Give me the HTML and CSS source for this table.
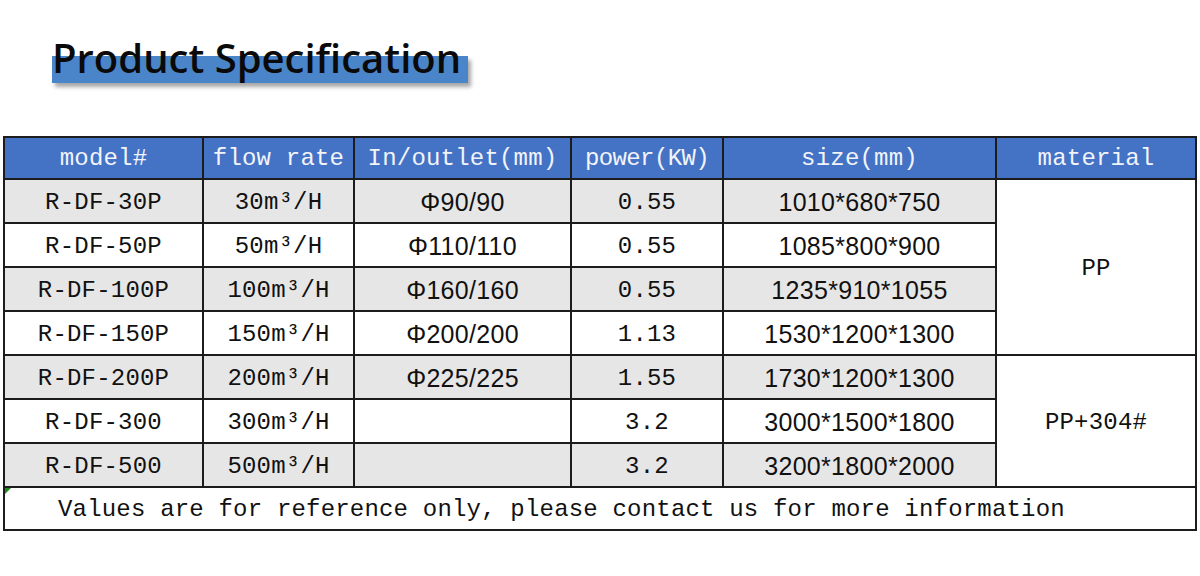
FILE: index.html
```html
<!DOCTYPE html>
<html>
<head>
<meta charset="utf-8">
<link rel="stylesheet" href="styles.css">
</head>
<body>
<div class="page">
  <div class="title-wrap">
    <h1 class="title"><span class="title-text">Product Specification</span></h1>
  </div>
  <table class="spec">
    <colgroup>
      <col class="c1"><col class="c2"><col class="c3"><col class="c4"><col class="c5"><col class="c6">
    </colgroup>
    <thead>
      <tr>
        <th>model#</th><th>flow rate</th><th>In/outlet(mm)</th><th class="tight">power(KW)</th><th>size(mm)</th><th>material</th>
      </tr>
    </thead>
    <tbody>
      <tr class="odd">
        <td>R-DF-30P</td><td>30m³/H</td><td class="sans">Φ90/90</td><td>0.55</td><td class="sans">1010*680*750</td>
        <td class="mat" rowspan="4">PP</td>
      </tr>
      <tr>
        <td>R-DF-50P</td><td>50m³/H</td><td class="sans">Φ110/110</td><td>0.55</td><td class="sans">1085*800*900</td>
      </tr>
      <tr class="odd">
        <td>R-DF-100P</td><td>100m³/H</td><td class="sans">Φ160/160</td><td>0.55</td><td class="sans">1235*910*1055</td>
      </tr>
      <tr>
        <td>R-DF-150P</td><td>150m³/H</td><td class="sans">Φ200/200</td><td>1.13</td><td class="sans">1530*1200*1300</td>
      </tr>
      <tr class="odd">
        <td>R-DF-200P</td><td>200m³/H</td><td class="sans">Φ225/225</td><td>1.55</td><td class="sans">1730*1200*1300</td>
        <td class="mat" rowspan="3">PP+304#</td>
      </tr>
      <tr>
        <td>R-DF-300</td><td>300m³/H</td><td class="sans"></td><td>3.2</td><td class="sans">3000*1500*1800</td>
      </tr>
      <tr class="odd">
        <td>R-DF-500</td><td>500m³/H</td><td class="sans"></td><td>3.2</td><td class="sans">3200*1800*2000</td>
      </tr>
      <tr>
        <td class="note" colspan="6">Values are for reference only, please contact us for more information<span class="marker"></span></td>
      </tr>
    </tbody>
  </table>
</div>
</body>
</html>
```

FILE: styles.css
```css
html, body {
  margin: 0;
  padding: 0;
  background: #ffffff;
}

.page {
  width: 1200px;
  height: 576px;
  overflow: hidden;
}

.title-wrap {
  padding: 36px 0 0 52px;
  height: 136px;
  box-sizing: border-box;
}

.title {
  margin: 0;
  position: relative;
  display: inline-block;
  font-family: "Open Sans", "Noto Sans", sans-serif;
  font-weight: 600;
  font-size: 40px;
  line-height: 44px;
  color: #0a0a0a;
}

.title::before {
  content: "";
  position: absolute;
  left: 0;
  top: 20px;
  width: 416px;
  height: 27px;
  background: #4a85c9;
  box-shadow: 3px 4px 4px rgba(0, 0, 0, 0.35);
}

.title-text {
  position: relative;
  letter-spacing: 0px;
}

.spec {
  margin-left: 3px;
  border-collapse: collapse;
  table-layout: fixed;
  width: 1192px;
  font-family: "Liberation Mono", "DejaVu Sans Mono", monospace;
  font-size: 24px;
  letter-spacing: 0.2px;
  color: #111;
}

.c1 { width: 199px; }
.c2 { width: 151px; }
.c3 { width: 217px; }
.c4 { width: 152px; }
.c5 { width: 273px; }
.c6 { width: 200px; }

.spec th,
.spec td {
  border: 2px solid #1c1c1c;
  padding: 0;
  text-align: center;
  white-space: nowrap;
  overflow: hidden;
}

.spec th {
  height: 40px;
  background: #4472c4;
  color: #f2f4fa;
  font-weight: normal;
}

.spec th.tight {
  letter-spacing: -0.6px;
}

.spec td {
  height: 40px;
  padding-top: 2px;
  background: #ffffff;
}

.spec tr.odd td {
  background: #e7e6e6;
}

.spec tr.odd td.mat,
.spec td.mat {
  background: #ffffff;
}

.spec td.sans {
  font-family: "Liberation Sans", Arial, sans-serif;
  font-size: 25px;
  letter-spacing: 0.3px;
}

.spec td.note {
  position: relative;
  text-align: left;
  padding-left: 53px;
  height: 39px;
  background: #ffffff;
  letter-spacing: 0.19px;
}

.marker {
  position: absolute;
  left: 0;
  top: 0;
  width: 0;
  height: 0;
  border-top: 6px solid #1a8a1a;
  border-right: 6px solid transparent;
}
```
